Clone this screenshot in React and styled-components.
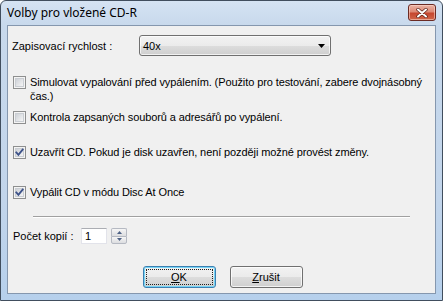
import React from "react";
import styled, { createGlobalStyle } from "styled-components";

const Global = createGlobalStyle`
  html, body { margin: 0; padding: 0; background: #ffffff; }
  body { font-family: "Liberation Sans", Arial, sans-serif; }
`;

const Window = styled.div`
  width: 443px;
  height: 301px;
  box-sizing: border-box;
  border: 1px solid #414e5e;
  border-radius: 6px 6px 0 0;
  background: linear-gradient(#d5e3f3 0px, #c8d9ec 24px, #c2d5eb 200px, #b6d0ec 100%);
  display: flex;
  flex-direction: column;
  overflow: hidden;
`;

const TitleBar = styled.div`
  height: 24px;
  display: flex;
  align-items: flex-start;
  padding: 0 6px 0 6px;
`;

const Title = styled.div`
  flex: 1;
  font-family: "Noto Sans", "Liberation Sans", sans-serif;
  font-size: 12px;
  line-height: 24px;
  color: #000;
`;

const CloseButton = styled.div`
  margin-top: 3px;
  width: 28px;
  height: 17px;
  box-sizing: border-box;
  border: 1px solid #6b2b24;
  border-radius: 3px;
  background: linear-gradient(#eab3a5 0%, #dd8a76 45%, #c6472f 55%, #d0664a 100%);
  box-shadow: inset 0 0 0 1px rgba(255, 220, 210, 0.55);
  display: flex;
  align-items: center;
  justify-content: center;
`;

const Frame = styled.div`
  flex: 1;
  display: flex;
  padding: 0 6px 6px 6px;
`;

const Content = styled.div`
  flex: 1;
  border: 1px solid #8597ae;
  background: #f0f0f0;
  display: flex;
  flex-direction: column;
  padding-top: 9px;
  font-size: 11px;
  color: #000;
`;

const SpeedRow = styled.div`
  display: flex;
  align-items: center;
  height: 21px;
  padding-left: 4px;
`;

const Label = styled.div`
  width: ${(p) => p.$w}px;
  line-height: 14px;
  white-space: nowrap;
`;

const Combo = styled.div`
  width: 192px;
  height: 21px;
  box-sizing: border-box;
  border: 1px solid #707070;
  border-radius: 3px;
  background: linear-gradient(#f2f2f2 0%, #ebebeb 50%, #dddddd 50%, #cfcfcf 100%);
  box-shadow: inset 0 0 0 1px rgba(255, 255, 255, 0.7);
  display: flex;
  align-items: center;
  padding: 0 5px 0 3px;
`;

const ComboText = styled.div`
  flex: 1;
  line-height: 14px;
`;

const CheckRow = styled.div`
  display: flex;
  align-items: flex-start;
  gap: 4px;
  padding-left: 5px;
  margin-top: ${(p) => p.$mt}px;
`;

const CheckText = styled.div`
  line-height: 14px;
  white-space: nowrap;
  letter-spacing: -0.1px;
`;

const BoxSvg = styled.svg`
  flex: none;
  margin-top: 1px;
  display: block;
`;

const Separator = styled.div`
  margin: 17px 25px 0 25px;
  height: 0;
  border-top: 1px solid #a0a0a0;
  border-bottom: 1px solid #ffffff;
`;

const CopiesRow = styled.div`
  display: flex;
  align-items: center;
  padding-left: 5px;
  margin-top: 10px;
  height: 16px;
`;

const NumberInput = styled.div`
  width: 26px;
  height: 16px;
  box-sizing: border-box;
  background: #ffffff;
  border: 1px solid #e2e3ea;
  border-top-color: #abadb3;
  display: flex;
  align-items: center;
  padding-left: 3px;
  line-height: 14px;
`;

const Spinner = styled.div`
  margin-left: 4px;
  width: 16px;
  height: 16px;
  display: flex;
  flex-direction: column;
`;

const SpinHalf = styled.div`
  flex: 1;
  box-sizing: border-box;
  border: 1px solid #b5b9c2;
  ${(p) => (p.$top ? "border-bottom: none; border-radius: 2px 2px 0 0;" : "border-radius: 0 0 2px 2px;")}
  background: linear-gradient(#f6f6f6, #dcdde0);
  display: flex;
  align-items: center;
  justify-content: center;
`;

const ButtonRow = styled.div`
  display: flex;
  justify-content: center;
  gap: 14px;
  margin-top: 22px;
  padding-left: 2px;
`;

const Button = styled.div`
  width: 73px;
  height: 22px;
  box-sizing: border-box;
  border: 1px solid ${(p) => (p.$default ? "#3c7fb1" : "#707070")};
  border-radius: 3px;
  background: linear-gradient(#f2f2f2 0%, #ebebeb 50%, #dddddd 50%, #cfcfcf 100%);
  box-shadow: inset 0 0 0 1px ${(p) => (p.$default ? "#74d4f6" : "rgba(255,255,255,0.75)")};
  display: flex;
  align-items: center;
  justify-content: center;
  padding: 2px;
`;

const FocusRect = styled.div`
  flex: 1;
  align-self: stretch;
  display: flex;
  align-items: center;
  justify-content: center;
  border: 1px dotted ${(p) => (p.$on ? "#202020" : "transparent")};
  line-height: 14px;
`;

const Accel = styled.span`
  text-decoration: underline;
`;

function CheckBox({ checked }) {
  return (
    <BoxSvg width="13" height="13" viewBox="0 0 13 13">
      <defs>
        <linearGradient id="cbg" x1="0" y1="0" x2="1" y2="1">
          <stop offset="0" stopColor="#cbcfd5" />
          <stop offset="1" stopColor="#f7f7f7" />
        </linearGradient>
      </defs>
      <rect x="0.5" y="0.5" width="12" height="12" fill="#f4f4f4" stroke="#8e8f8f" />
      <rect x="2.5" y="2.5" width="8" height="8" fill="url(#cbg)" stroke="#c9cdd2" />
      {checked && (
        <path
          d="M3.3 6.4 L5.4 8.9 L9.7 3.6"
          fill="none"
          stroke="#3d5289"
          strokeWidth="1.8"
          strokeLinecap="square"
        />
      )}
    </BoxSvg>
  );
}

export default function App() {
  return (
    <>
      <Global />
      <Window>
        <TitleBar>
          <Title>Volby pro vložené CD-R</Title>
          <CloseButton>
            <svg width="12" height="10" viewBox="0 0 12 10">
              <path d="M2 1.5 L10 8.5 M10 1.5 L2 8.5" stroke="#5a2018" strokeWidth="3.4" strokeLinecap="round" />
              <path d="M2 1.5 L10 8.5 M10 1.5 L2 8.5" stroke="#ffffff" strokeWidth="2" strokeLinecap="round" />
            </svg>
          </CloseButton>
        </TitleBar>
        <Frame>
          <Content>
            <SpeedRow>
              <Label $w={127}>Zapisovací rychlost :</Label>
              <Combo>
                <ComboText>40x</ComboText>
                <svg width="7" height="4" viewBox="0 0 7 4">
                  <path d="M0 0 H7 L3.5 4 Z" fill="#000" />
                </svg>
              </Combo>
            </SpeedRow>

            <CheckRow $mt={19}>
              <CheckBox />
              <CheckText>
                Simulovat vypalování před vypálením. (Použito pro testování, zabere dvojnásobný
                <br />
                čas.)
              </CheckText>
            </CheckRow>
            <CheckRow $mt={7}>
              <CheckBox />
              <CheckText>Kontrola zapsaných souborů a adresářů po vypálení.</CheckText>
            </CheckRow>
            <CheckRow $mt={21}>
              <CheckBox checked />
              <CheckText>Uzavřít CD. Pokud je disk uzavřen, není později možné provést změny.</CheckText>
            </CheckRow>
            <CheckRow $mt={26}>
              <CheckBox checked />
              <CheckText>Vypálit CD v módu Disc At Once</CheckText>
            </CheckRow>

            <Separator />

            <CopiesRow>
              <Label $w={68}>Počet kopií :</Label>
              <NumberInput>1</NumberInput>
              <Spinner>
                <SpinHalf $top>
                  <svg width="5" height="3" viewBox="0 0 5 3">
                    <path d="M0 3 H5 L2.5 0 Z" fill="#4d6185" />
                  </svg>
                </SpinHalf>
                <SpinHalf>
                  <svg width="5" height="3" viewBox="0 0 5 3">
                    <path d="M0 0 H5 L2.5 3 Z" fill="#4d6185" />
                  </svg>
                </SpinHalf>
              </Spinner>
            </CopiesRow>

            <ButtonRow>
              <Button $default>
                <FocusRect $on>
                  <span>
                    <Accel>O</Accel>K
                  </span>
                </FocusRect>
              </Button>
              <Button>
                <FocusRect>
                  <span>
                    <Accel>Z</Accel>rušit
                  </span>
                </FocusRect>
              </Button>
            </ButtonRow>
          </Content>
        </Frame>
      </Window>
    </>
  );
}
